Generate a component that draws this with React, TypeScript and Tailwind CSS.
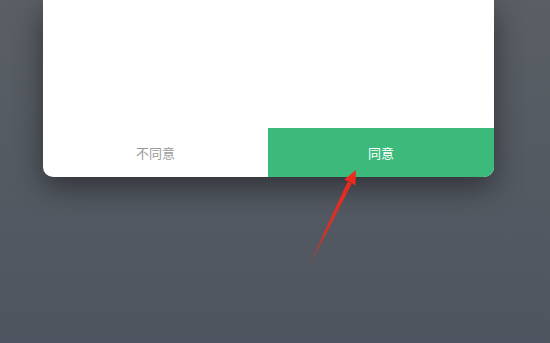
import React from "react";

export default function App() {
  return (
    <div
      className="relative w-[550px] h-[343px] overflow-hidden bg-gradient-to-b from-[#5a5f65] to-[#4f5560]"
      style={{ fontFamily: '"Noto Sans CJK SC", "Noto Sans", sans-serif' }}
    >
      <div className="ml-[43px] w-[451px] h-[177px] bg-white rounded-b-[10px] overflow-hidden flex flex-col shadow-[0_10px_30px_rgba(0,0,0,0.45)]">
        <div className="flex-1" />
        <div className="flex h-[49px]">
          <button className="w-[225px] flex items-center justify-center text-[13px] text-[#9a9a9a]">
            不同意
          </button>
          <button className="flex-1 flex items-center justify-center text-[13px] text-white bg-[#3bba7c]">
            同意
          </button>
        </div>
      </div>
      <svg
        className="absolute left-0 top-0 pointer-events-none"
        width="550"
        height="343"
        viewBox="0 0 550 343"
      >
        <defs>
          <linearGradient id="ag" x1="308" y1="268" x2="356" y2="170" gradientUnits="userSpaceOnUse">
            <stop offset="0" stopColor="#f0291e" stopOpacity="0" />
            <stop offset="0.35" stopColor="#f0291e" stopOpacity="0.85" />
            <stop offset="1" stopColor="#f0291e" stopOpacity="1" />
          </linearGradient>
        </defs>
        <polygon
          points="308.4,268.2 307.6,267.8 347.8,181.6 351.8,183.6"
          fill="url(#ag)"
        />
        <polygon points="356,170 355.4,185.4 350,182 344.2,179.8" fill="#f0291e" />
      </svg>
    </div>
  );
}
